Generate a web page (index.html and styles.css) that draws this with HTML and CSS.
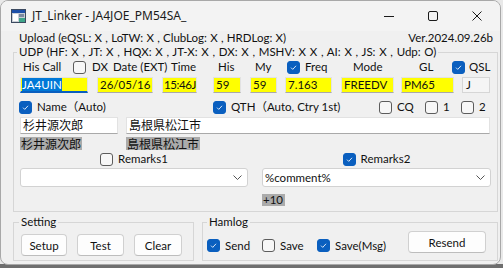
FILE: index.html
```html
<!DOCTYPE html>
<html lang="ja">
<head>
    <meta charset="UTF-8">
    <title>JT_Linker</title>
    <link rel="stylesheet" href="styles.css">
</head>
<body>
    <div class="window">
        <div class="titlebar">
            <svg class="app-icon" width="15" height="14" viewBox="0 0 15 14">
                <rect x="0.5" y="0.5" width="14" height="13" fill="#c9ced6" stroke="#3c4a60"/>
                <rect x="1" y="1" width="13" height="3" fill="#1d4fa8"/>
                <rect x="2" y="5" width="5" height="7" fill="#ffffff"/>
                <rect x="8" y="5" width="5" height="3" fill="#7c8aa0"/>
                <rect x="8" y="9" width="6" height="4" fill="#3fa58a"/>
            </svg>
            <span class="title">JT_Linker - JA4JOE_PM54SA_</span>
            <div class="controls">
                <span class="ctl">
                    <svg width="10" height="10" viewBox="0 0 10 10"><path d="M0 5.5h10" stroke="#1a1a1a"/></svg>
                </span>
                <span class="ctl">
                    <svg width="10" height="10" viewBox="0 0 10 10"><rect x="0.5" y="0.5" width="9" height="9" rx="1.5" fill="none" stroke="#1a1a1a"/></svg>
                </span>
                <span class="ctl">
                    <svg width="10" height="10" viewBox="0 0 10 10"><path d="M0.5 0.5l9 9M9.5 0.5l-9 9" stroke="#1a1a1a"/></svg>
                </span>
            </div>
        </div>

        <div class="upload-row">
            <span class="upload">Upload (eQSL: X , LoTW: X , ClubLog: X , HRDLog: X)</span>
            <span>Ver.2024.09.26b</span>
        </div>

        <fieldset class="group udp">
            <legend>UDP (HF: X , JT: X , HQX: X , JT-X: X , DX: X , MSHV: X X , AI: X , JS: X , Udp: O)</legend>

            <div class="label-row">
                <span class="lbl l-call">His Call</span>
                <span class="lbl l-dx"><span class="cb"></span>DX</span>
                <span class="lbl l-date">Date (EXT)</span>
                <span class="lbl l-time">Time</span>
                <span class="lbl l-his">His</span>
                <span class="lbl l-my">My</span>
                <span class="lbl l-freq"><span class="cb on"><svg viewBox="0 0 13 13"><path d="M3.6 6.7l2 2 3.9-4.2"/></svg></span>Freq</span>
                <span class="lbl l-mode">Mode</span>
                <span class="lbl l-gl">GL</span>
                <span class="lbl l-qsl"><span class="cb on"><svg viewBox="0 0 13 13"><path d="M3.6 6.7l2 2 3.9-4.2"/></svg></span>QSL</span>
            </div>

            <div class="field-row">
                <div class="box yellow focused f-call"><span class="selected">JA4UIN</span></div>
                <div class="box yellow f-date">26/05/16</div>
                <div class="box yellow f-time">15:46J</div>
                <div class="box yellow f-his">59</div>
                <div class="box yellow f-my">59</div>
                <div class="box yellow f-freq">7.163</div>
                <div class="box yellow f-mode">FREEDV</div>
                <div class="box yellow f-gl">PM65</div>
                <div class="box readonly f-qsl">J</div>
            </div>

            <div class="check-row">
                <span class="opt o-name"><span class="cb on"><svg viewBox="0 0 13 13"><path d="M3.6 6.7l2 2 3.9-4.2"/></svg></span>Name（Auto)</span>
                <span class="opt o-qth"><span class="cb on"><svg viewBox="0 0 13 13"><path d="M3.6 6.7l2 2 3.9-4.2"/></svg></span>QTH（Auto, Ctry 1st)</span>
                <span class="opt o-cq"><span class="cb"></span>CQ</span>
                <span class="opt o-one"><span class="cb"></span>1</span>
                <span class="opt"><span class="cb"></span>2</span>
            </div>

            <div class="pair">
                <div class="box white">杉井源次郎</div>
                <div class="box white">島根県松江市</div>
                <span class="echo">杉井源次郎</span>
                <span class="echo">島根県松江市</span>
            </div>

            <div class="remarks">
                <span class="opt centered"><span class="cb"></span>Remarks1</span>
                <span class="opt centered"><span class="cb on"><svg viewBox="0 0 13 13"><path d="M3.6 6.7l2 2 3.9-4.2"/></svg></span>Remarks2</span>
                <div class="combo">
                    <span></span>
                    <svg class="chevron" width="9" height="5" viewBox="0 0 9 5"><path d="M0.5 0.5l4 4 4-4" fill="none" stroke="#555"/></svg>
                </div>
                <div class="combo">
                    <span>%comment%</span>
                    <svg class="chevron" width="9" height="5" viewBox="0 0 9 5"><path d="M0.5 0.5l4 4 4-4" fill="none" stroke="#555"/></svg>
                </div>
                <span></span>
                <span class="echo small">+10</span>
            </div>
        </fieldset>

        <div class="bottom">
            <fieldset class="group setting">
                <legend>Setting</legend>
                <div class="buttons">
                    <button class="btn b-setup">Setup</button>
                    <button class="btn b-test">Test</button>
                    <button class="btn b-clear">Clear</button>
                </div>
            </fieldset>
            <fieldset class="group hamlog">
                <legend>Hamlog</legend>
                <div class="hamlog-row">
                    <span class="opt h-send"><span class="cb on"><svg viewBox="0 0 13 13"><path d="M3.6 6.7l2 2 3.9-4.2"/></svg></span>Send</span>
                    <span class="opt h-save"><span class="cb"></span>Save</span>
                    <span class="opt h-msg"><span class="cb on"><svg viewBox="0 0 13 13"><path d="M3.6 6.7l2 2 3.9-4.2"/></svg></span>Save(Msg)</span>
                    <button class="btn b-resend">Resend</button>
                </div>
            </fieldset>
        </div>
    </div>
</body>
</html>
```

FILE: styles.css
```css
* {
    box-sizing: border-box;
}
body {
    margin: 0;
    width: 503px;
    height: 268px;
    overflow: hidden;
    background: linear-gradient(#e9e9e9 0 264px, #6e6e6e 264px);
    font-family: Lato, "Noto Sans CJK JP", sans-serif;
    font-size: 11.5px;
    line-height: 14px;
    color: #111;
}
.window {
    width: 501px;
    height: 265px;
    background-color: #f0f0f0;
    border: 1px solid #a8a8a8;
    border-radius: 8px;
    overflow: hidden;
}

/* title bar */
.titlebar {
    height: 30px;
    display: flex;
    align-items: center;
    padding-left: 10px;
    background-color: #f3f3f3;
}
.app-icon {
    display: block;
}
.title {
    margin-left: 6px;
    font-family: "Noto Sans", sans-serif;
    font-size: 12px;
    color: #1a1a1a;
}
.controls {
    margin-left: auto;
    margin-right: 1px;
    display: flex;
    height: 30px;
}
.ctl {
    width: 44px;
    display: flex;
    align-items: center;
    justify-content: center;
}
.ctl svg {
    display: block;
}

.upload-row {
    height: 14px;
    display: flex;
    justify-content: space-between;
    padding: 0 7px 0 18px;
}
.upload {
    word-spacing: 0.3px;
}

/* group boxes */
.group {
    margin: 0 2px 0 12px;
    padding: 0 6px 5px 6px;
    border: 1px solid #d6d6d6;
    min-width: 0;
}
.group legend {
    padding: 0 2px;
    margin-left: -3px;
    line-height: 14px;
}
.udp legend {
    word-spacing: 0.75px;
}

.label-row {
    display: flex;
    align-items: center;
    height: 14px;
    margin-top: 1px;
    padding-left: 3px;
}
.lbl {
    display: flex;
    align-items: center;
    gap: 6px;
    white-space: nowrap;
}
.l-call { width: 50px; }
.l-dx { width: 40px; }
.l-date { width: 58px; }
.l-time { width: 47px; }
.l-his { width: 37px; }
.l-my { width: 32px; }
.l-freq { width: 66px; gap: 5px; }
.l-mode { width: 66px; }
.l-gl { width: 33px; }
.l-qsl { gap: 4px; }

/* checkboxes */
.cb {
    width: 13px;
    height: 13px;
    flex: none;
    border: 1px solid #5c5c5c;
    border-radius: 3px;
    background-color: #f7f7f7;
    display: inline-block;
}
.cb.on {
    border-color: #0a5fbf;
    background-color: #0a5fbf;
}
.cb svg {
    display: block;
    width: 11px;
    height: 11px;
    fill: none;
    stroke: #fff;
    stroke-width: 1;
}

/* text boxes */
.field-row {
    display: flex;
    margin-top: 3px;
    height: 16px;
}
.box {
    height: 16px;
    padding-left: 2px;
    border: 1px solid #e2e2e2;
    border-bottom-color: #a9a9a9;
    line-height: 14px;
    white-space: nowrap;
    overflow: hidden;
}
.yellow {
    background-color: #ffff00;
}
.white {
    background-color: #fff;
    height: 17px;
    font-family: "Noto Sans CJK JP", sans-serif;
    font-size: 12px;
}
.readonly {
    background-color: #f5f5f5;
    border-color: #d6d6d6;
    padding-left: 3px;
}
.focused {
    border-bottom: 2px solid #0a5fbf;
    padding-left: 1px;
}
.selected {
    background-color: #0078d7;
    color: #fff;
}
.f-call { width: 68px; }
.f-date { width: 56px; margin-left: 9px; }
.f-time { width: 35px; margin-left: 9px; padding-left: 1px; letter-spacing: -0.4px; }
.f-his { width: 28px; margin-left: 16px; }
.f-my { width: 27px; margin-left: 9px; }
.f-freq { width: 47px; margin-left: 8px; }
.f-mode { width: 53px; margin-left: 9px; }
.f-gl { width: 53px; margin-left: 7px; }
.f-qsl { width: 28px; margin-left: 8px; }

.check-row {
    display: flex;
    align-items: center;
    height: 14px;
    margin-top: 7px;
    margin-left: -1px;
}
.opt {
    display: flex;
    align-items: center;
    gap: 5px;
    white-space: nowrap;
}
.o-name { width: 194px; }
.o-qth { width: 166px; }
.o-cq { width: 46px; }
.o-one { width: 36px; }

.pair {
    display: grid;
    grid-template-columns: 98px 364px;
    column-gap: 8px;
    row-gap: 3px;
    margin-top: 3px;
}
.echo {
    justify-self: start;
    height: 13px;
    line-height: 13px;
    padding: 0 1px;
    background-color: #ababab;
    font-family: "Noto Sans CJK JP", sans-serif;
    font-size: 12px;
}
.echo.small {
    height: 12px;
    line-height: 12px;
    margin-top: 5px;
    width: 23px;
    font-family: Lato, sans-serif;
    font-size: 11.5px;
}

.remarks {
    display: grid;
    grid-template-columns: 228px 229px;
    column-gap: 14px;
    row-gap: 2px;
    margin-top: 2px;
}
.centered {
    justify-self: center;
    height: 14px;
}
.combo {
    height: 19px;
    display: flex;
    align-items: center;
    justify-content: space-between;
    padding: 0 5px 0 2px;
    background-color: #fff;
    border: 1px solid #d2d2d2;
    border-radius: 3px;
}

/* lower groups */
.bottom {
    display: flex;
    margin: 3px 2px 0 12px;
}
.bottom .group {
    margin: 0;
}
.setting {
    width: 181px;
    padding: 0 6px 4px 7px;
}
.setting legend {
    margin-left: -2px;
}
.hamlog {
    flex: 1;
    margin-left: 8px !important;
    padding: 0 4px 4px 4px;
}
.hamlog legend {
    margin-left: 0;
}
.buttons {
    display: flex;
    gap: 10px;
    margin-top: 5px;
}
.btn {
    height: 22px;
    padding: 0;
    font-family: inherit;
    font-size: 11.5px;
    color: #111;
    background-color: #fdfdfd;
    border: 1px solid #d0d0d0;
    border-bottom-color: #bdbdbd;
    border-radius: 4px;
}
.b-setup { width: 46px; }
.b-test { width: 47px; }
.b-clear { width: 48px; }
.hamlog-row {
    display: flex;
    align-items: flex-start;
}
.hamlog-row .opt {
    margin-top: 10px;
    height: 13px;
}
.h-send { width: 55px; }
.h-save { width: 55px; }
.h-msg { width: 91px; }
.b-resend {
    width: 78px;
    margin-top: 2px;
}
```
